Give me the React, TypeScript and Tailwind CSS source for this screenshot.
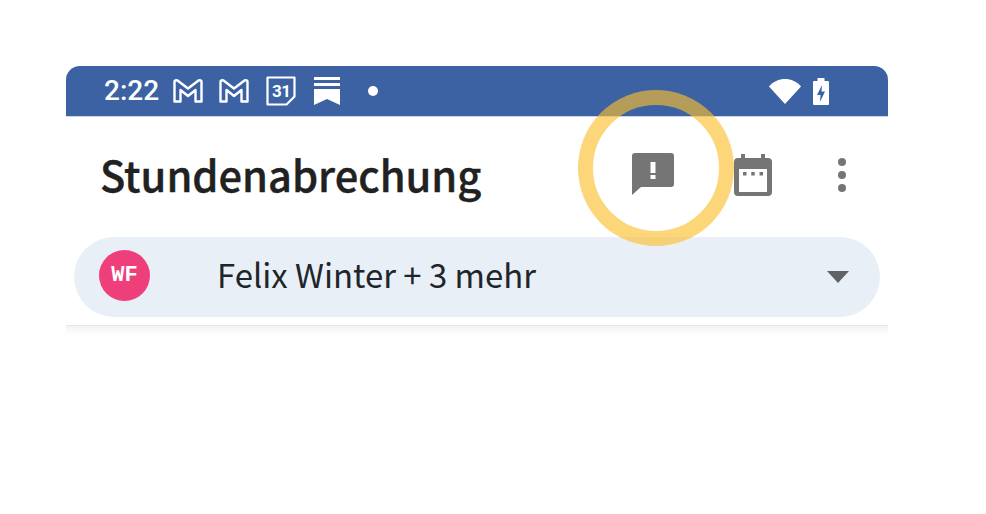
const cjk = "font-['Noto_Sans_CJK_SC','Noto_Sans',sans-serif]";

function Gmail() {
  return (
    <svg viewBox="0 0 30 24" className="h-6 w-[30px]" fill="none" stroke="white" strokeWidth="2.400" strokeLinejoin="round">
      <path d="M1.500 2.500C1.500 1.500 3 1 4.500 1.500L15 9.500 25.500 1.500C27 1 28.500 1.500 28.500 2.500V22.500H22.500V11L15 17 7.500 11V22.500H1.500z" />
    </svg>
  );
}

function Calendar31() {
  return (
    <div className="relative size-[30px]">
      <svg viewBox="0 0 30 30" className="size-[30px]" fill="none" stroke="white" strokeWidth="2.200" strokeLinejoin="round">
        <path d="M1.500 1.500h27v19l-8 8h-19z" />
      </svg>
      <span className="absolute left-[6px] top-[5px] font-['Roboto',sans-serif] text-[17px] font-bold leading-[20px] tracking-[-0.5px] text-white">31</span>
    </div>
  );
}

function Keep() {
  return (
    <svg viewBox="0 0 26 28" className="h-7 w-[26px]" fill="white">
      <rect x="0" y="0" width="26" height="3" />
      <rect x="0" y="6" width="26" height="3" />
      <path d="M0 12h26v16l-13-6-13 6z" />
    </svg>
  );
}

function StatusBar() {
  return (
    <div className="flex h-[51px] items-center rounded-t-[14px] border-b border-[#c9d4ea] bg-[#3c62a3] pl-[38px] pr-[58px]">
      <span className="w-[69px] font-['Roboto',sans-serif] text-[28px] font-medium leading-none text-white">2:22</span>
      <Gmail />
      <div className="ml-[16px]"><Gmail /></div>
      <div className="ml-[17px]"><Calendar31 /></div>
      <div className="ml-[18px]"><Keep /></div>
      <div className="ml-[28px] size-[10px] rounded-full bg-white" />
      <svg viewBox="0 0 32 28" className="ml-auto h-7 w-8" fill="white">
        <path d="M0 9.500C4 4.500 10 2 16 2s12 2.500 16 7.500L16 27z" />
      </svg>
      <svg viewBox="0 0 18 28" className="ml-[11px] h-7 w-[18px]">
        <path fill="white" d="M5.500 1h7v3H16a1 1 0 0 1 1 1v22a1 1 0 0 1-1 1H2a1 1 0 0 1-1-1V5a1 1 0 0 1 1-1h3.500z" />
        <path fill="#3c62a3" d="M10 8l-5 10h3.500L8 25l5-10.500H9.500z" />
      </svg>
    </div>
  );
}

function Toolbar() {
  return (
    <div className="flex h-[120px] items-start pl-[34px] pr-[42px]">
      <h1 className={`${cjk} mt-[26px] text-[41.600px] font-medium leading-[62px] text-[#212121] [-webkit-text-stroke:0.4px_#212121]`}>Stundenabrechung</h1>
      <svg viewBox="0 0 42 42" className="ml-auto mt-[36px] size-[42px]" fill="#757575">
        <path fillRule="evenodd" d="M3 0h36a3 3 0 0 1 3 3v28a3 3 0 0 1-3 3H9l-9 8V3a3 3 0 0 1 3-3zM18.500 9v11h5V9zm0 13v4h5v-4z" />
      </svg>
      <svg viewBox="0 0 38 42" className="ml-[60px] mt-[37px] h-[42px] w-[38px]" fill="#757575">
        <path fillRule="evenodd" d="M7 0h4v4h16V0h4v4h3a4 4 0 0 1 4 4v30a4 4 0 0 1-4 4H4a4 4 0 0 1-4-4V8a4 4 0 0 1 4-4h3zM5 15v23h28V15zm4 3h3.500v3.500H9zm8.250 0h3.500v3.500h-3.500zm8.250 0H29v3.500h-3.500z" />
      </svg>
      <div className="ml-[66px] mt-[41px] flex flex-col gap-[5px]">
        <div className="size-2 rounded-full bg-[#757575]" />
        <div className="size-2 rounded-full bg-[#757575]" />
        <div className="size-2 rounded-full bg-[#757575]" />
      </div>
    </div>
  );
}

function PersonPicker() {
  return (
    <div>
      <div className="px-2 pb-2">
        <div className="flex h-20 items-center rounded-[40px] bg-[#e8eff7] pl-[25px] pr-[31px]">
          <div className="mb-1 flex size-[51px] items-center justify-center rounded-full bg-[#ee3f7a] font-['Liberation_Mono',monospace] text-[22px] font-bold text-white">
            <span>WF</span>
          </div>
          <span className={`${cjk} mb-[5px] ml-[67px] text-[32.900px] leading-none text-[#212529]`}>Felix Winter + 3 mehr</span>
          <svg viewBox="0 0 22 12" className="ml-auto h-3 w-[22px]" fill="#5f6368">
            <path d="M0 0h22L11 12z" />
          </svg>
        </div>
      </div>
      <div className="h-[10px] border-t border-[#e6e6e6] bg-gradient-to-b from-[#f3f3f3] to-white" />
    </div>
  );
}

export default function App() {
  return (
    <div className="relative h-[514px] w-[986px] overflow-hidden bg-white pl-[66px] pt-[66px]">
      <div className="w-[822px]">
        <StatusBar />
        <Toolbar />
        <PersonPicker />
      </div>
      {/* highlight ring over the alert icon */}
      <div className="absolute left-[578px] top-[90px] size-[156px] rounded-full border-[15px] border-[#fcbe2d]/[0.63]" />
    </div>
  );
}
